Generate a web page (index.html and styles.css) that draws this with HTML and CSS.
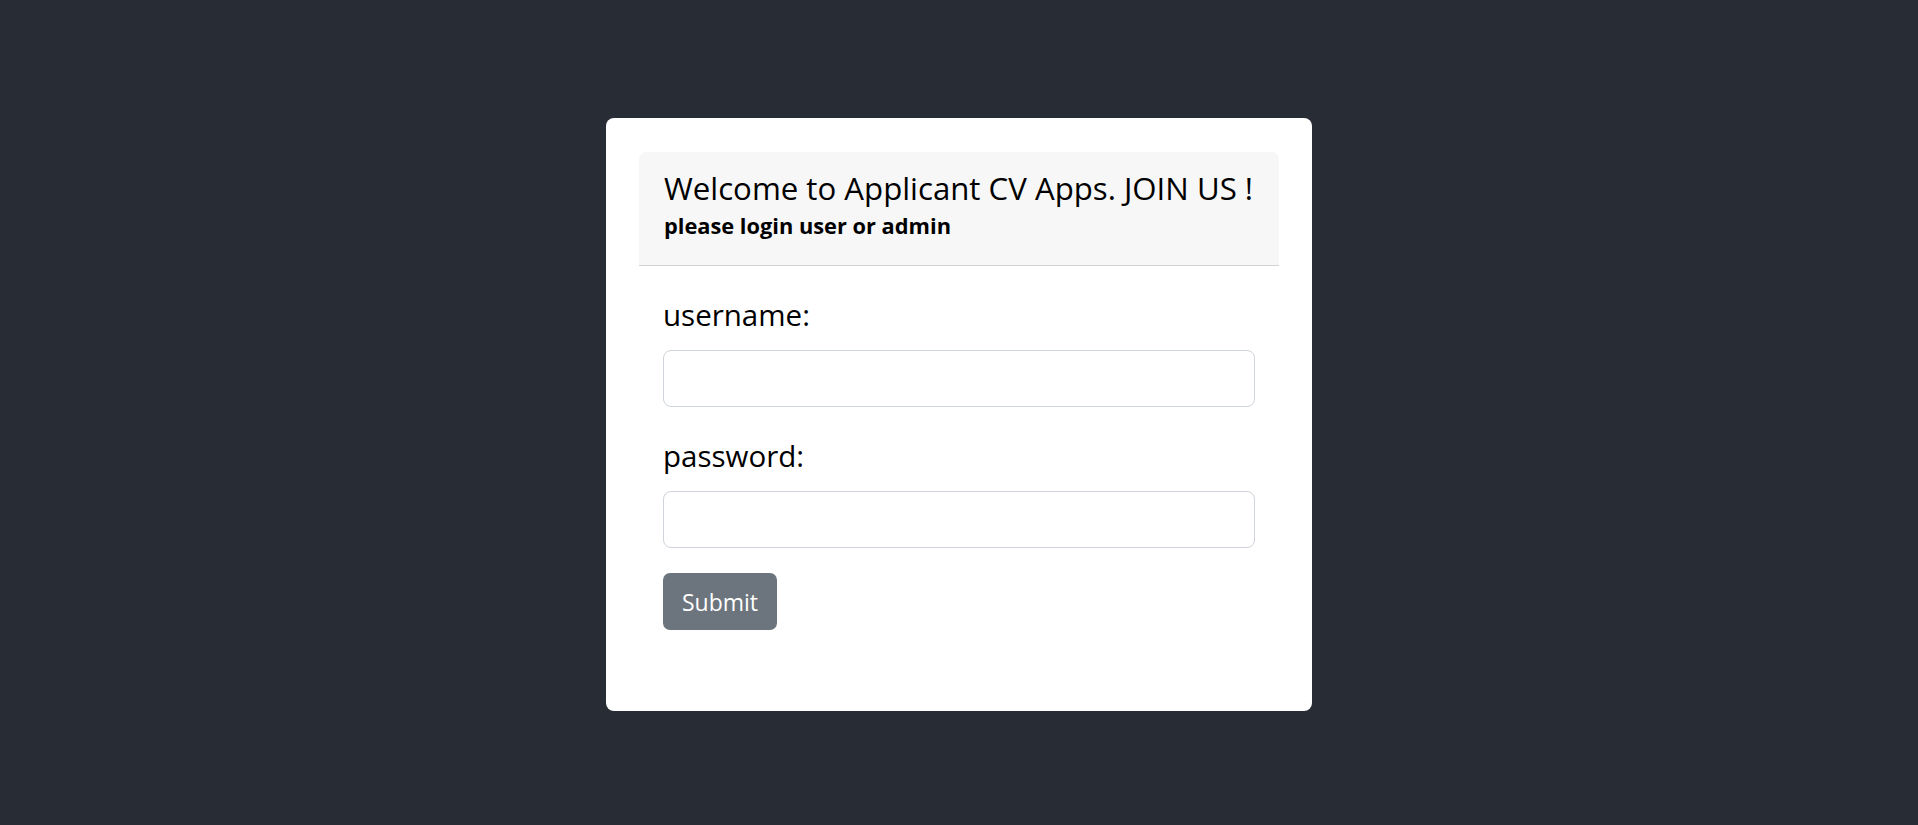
FILE: index.html
```html
<!DOCTYPE html>
<html lang="en">
<head>
<meta charset="utf-8">
<title>Applicant CV Apps</title>
<link rel="stylesheet" href="styles.css">
</head>
<body>
<div class="app">
  <div class="card">
    <div class="card-header">
      <div class="title">Welcome to Applicant CV Apps. JOIN US !</div>
      <div class="subtitle">please login user or admin</div>
    </div>
    <form class="card-body">
      <div class="group">
        <label class="label" for="username">username:</label>
        <input class="input" id="username" type="text">
      </div>
      <div class="group">
        <label class="label" for="password">password:</label>
        <input class="input" id="password" type="password">
      </div>
      <button class="btn" type="button">Submit</button>
    </form>
  </div>
</div>
</body>
</html>
```

FILE: styles.css
```css
* { box-sizing: border-box; }
html, body { margin: 0; padding: 0; }
body {
  background: #282c34;
  font-family: "Open Sans", "Noto Sans", sans-serif;
  color: #000;
}
.app {
  min-height: 100vh;
  padding-top: 4px;
  display: flex;
  align-items: center;
  justify-content: center;
}
.card {
  width: 706px;
  background: #fff;
  border-radius: 8px;
  padding: 34px 33px 33px;
}
.card-header {
  background: #f7f7f7;
  border-bottom: 1px solid #d2d2d2;
  border-radius: 7px 7px 0 0;
  padding: 16px 25px 24px;
}
.title {
  font-size: 31.2px;
  line-height: 40px;
  font-weight: 400;
  white-space: nowrap;
}
.subtitle {
  margin-top: 3px;
  font-size: 21.8px;
  line-height: 30px;
  font-weight: 700;
  white-space: nowrap;
}
.card-body {
  padding: 29px 24px 48px;
  display: flex;
  flex-direction: column;
  align-items: flex-start;
}
.group {
  width: 100%;
  display: flex;
  flex-direction: column;
  margin-bottom: 29px;
}
.group:last-of-type { margin-bottom: 25px; }
.label {
  font-size: 29.5px;
  line-height: 40px;
  margin-bottom: 15px;
}
.input {
  width: 100%;
  height: 57px;
  border: 1px solid #ced4da;
  border-radius: 8px;
  background: #fff;
  padding: 0 15px;
  font-family: inherit;
  font-size: 20px;
}
.btn {
  height: 57px;
  width: 114px;
  border: none;
  border-radius: 7px;
  background: #6c757d;
  color: #fff;
  font-family: inherit;
  font-size: 23px;
  padding: 0;
}
```
